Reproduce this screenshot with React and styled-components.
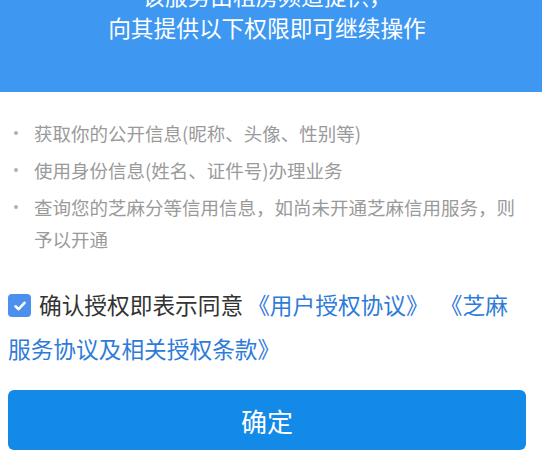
import React from "react";
import styled, { createGlobalStyle } from "styled-components";

const Global = createGlobalStyle`
  html, body { margin: 0; padding: 0; background: #fff; }
  body {
    font-family: "Noto Sans CJK SC", "Noto Sans", sans-serif;
    overflow: hidden;
  }
`;

const Page = styled.div`
  width: 542px;
  display: flex;
  flex-direction: column;
`;

const Header = styled.header`
  margin-top: -20px;
  padding: 0 16px 48px 8px;
  background: #3e98f2;
  color: #fff;
  text-align: center;
  font-size: 22.7px;
  line-height: 32px;
`;

const HeaderLine = styled.div``;

const Body = styled.main`
  padding: 25px 16px 20px 8px;
  display: flex;
  flex-direction: column;
`;

const List = styled.ul`
  list-style: none;
  margin: 0;
  padding: 0;
  display: flex;
  flex-direction: column;
  gap: 5px;
`;

const Item = styled.li`
  display: flex;
  align-items: flex-start;
  font-size: 18.5px;
  line-height: 32px;
  color: #9a9a9a;
`;

const Bullet = styled.span`
  flex: 0 0 26px;
  height: 32px;
  display: flex;
  align-items: center;
  padding-left: 6px;
  box-sizing: border-box;
  &::before {
    content: "";
    width: 4px;
    height: 4px;
    border-radius: 50%;
    background: #b0b0b0;
  }
`;

const ItemText = styled.span`
  flex: 1;
`;

const Agreement = styled.p`
  margin: 28px 0 0;
  font-size: 22.7px;
  line-height: 44px;
  color: #333;
`;

const Check = styled.span`
  display: inline-flex;
  align-items: center;
  justify-content: center;
  width: 23px;
  height: 23px;
  border-radius: 4px;
  background: #4c90ee;
  vertical-align: middle;
  margin: -4px 8px 0 0;
`;

const Link = styled.a`
  color: #2f7bd8;
  text-decoration: none;
  margin-left: ${(p) => p.$gap || 0}px;
`;

const Confirm = styled.button`
  margin-top: 19px;
  height: 60px;
  border: none;
  border-radius: 6px;
  background: #138ae8;
  color: #fff;
  font-family: inherit;
  font-size: 26px;
  cursor: pointer;
`;

const items = [
  "获取你的公开信息(昵称、头像、性别等)",
  "使用身份信息(姓名、证件号)办理业务",
  "查询您的芝麻分等信用信息，如尚未开通芝麻信用服务，则予以开通",
];

export default function App() {
  return (
    <Page>
      <Global />
      <Header>
        <HeaderLine>该服务由租房频道提供，</HeaderLine>
        <HeaderLine>向其提供以下权限即可继续操作</HeaderLine>
      </Header>
      <Body>
        <List>
          {items.map((t) => (
            <Item key={t}>
              <Bullet />
              <ItemText>{t}</ItemText>
            </Item>
          ))}
        </List>
        <Agreement>
          <Check>
            <svg width="14" height="14" viewBox="0 0 14 14">
              <path
                d="M2.5 7.3 L5.6 10.2 L11.5 3.8"
                fill="none"
                stroke="#fff"
                strokeWidth="2.6"
                strokeLinecap="round"
                strokeLinejoin="round"
              />
            </svg>
          </Check>
          确认授权即表示同意<Link href="#" $gap={4}>《用户授权协议》</Link> <Link href="#" $gap={6}>《芝麻服务协议及相关授权条款》</Link>
        </Agreement>
        <Confirm>确定</Confirm>
      </Body>
    </Page>
  );
}
